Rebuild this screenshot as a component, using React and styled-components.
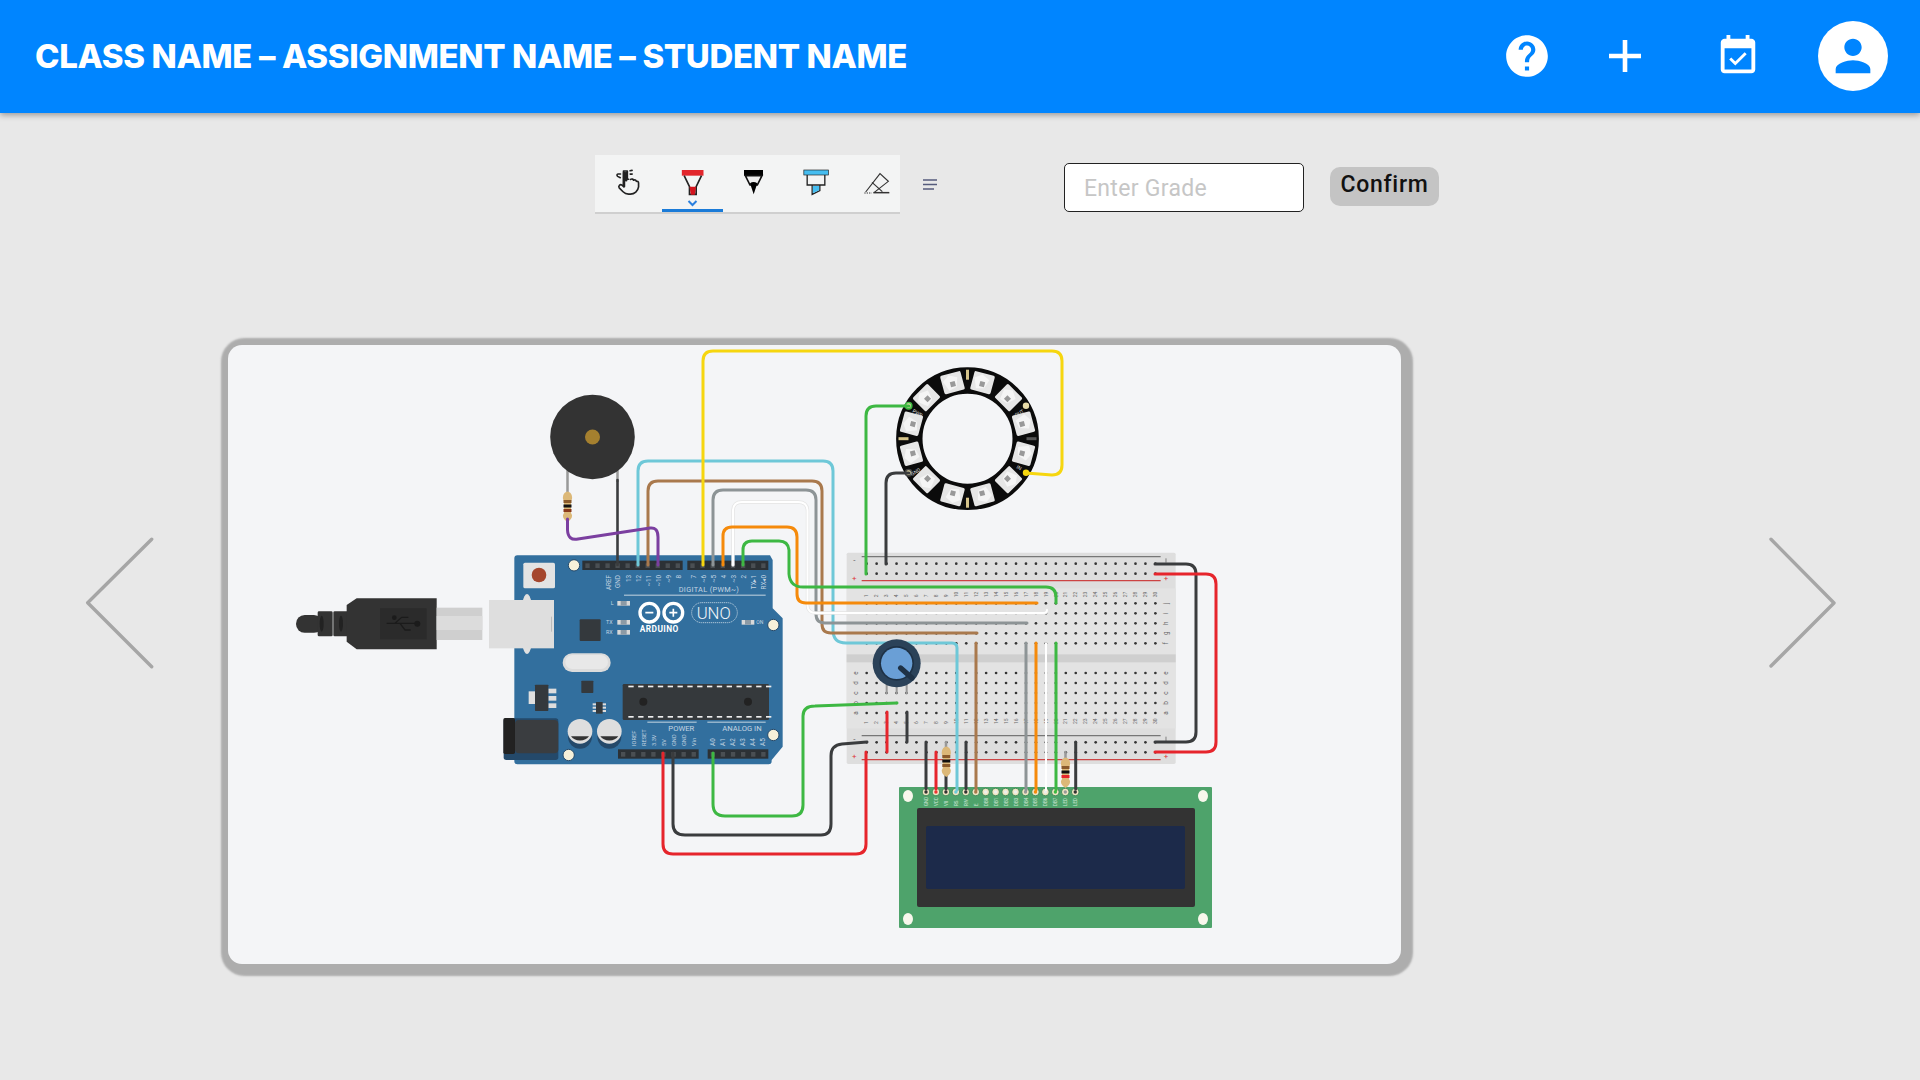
import React from "react";
import styled, { createGlobalStyle } from "styled-components";

const Global = createGlobalStyle`
  html, body { margin: 0; padding: 0; background: #e8e8e8; }
  * { box-sizing: border-box; }
  #root { width: 1920px; height: 1080px; overflow: hidden; }
`;

const Page = styled.div`
  width: 1920px;
  height: 1080px;
  background: #e8e8e8;
  font-family: Roboto, "Liberation Sans", sans-serif;
`;
const Header = styled.header`
  height: 113px;
  background: #0085ff;
  box-shadow: 0 2px 6px rgba(0, 0, 0, 0.35);
  display: flex;
  align-items: center;
  justify-content: space-between;
  padding: 0 32px 1px 35px;
`;
const Title = styled.h1`
  margin: 0;
  color: #fff;
  font: 800 33px/1 Inter, "Liberation Sans", sans-serif;
  letter-spacing: -0.35px;
  white-space: nowrap;
`;
const Actions = styled.div`
  display: flex;
  align-items: center;
`;
const ActionIcon = styled.svg`
  display: block;
  fill: #fff;
  width: ${(p) => p.$size}px;
  height: ${(p) => p.$size}px;
  margin-left: ${(p) => p.$gap || 0}px;
`;
const Avatar = styled.div`
  width: 70px;
  height: 70px;
  margin-left: 57px;
  border-radius: 50%;
  background: #fff;
  display: flex;
  align-items: center;
  justify-content: center;
`;
const AvatarGlyph = styled.svg`
  width: 52px;
  height: 52px;
  fill: #0085ff;
  display: block;
`;
const ControlRow = styled.div`
  display: flex;
  align-items: flex-start;
  margin-top: 42px;
  padding-left: 595px;
  height: 59px;
`;
const Tools = styled.div`
  width: 305px;
  height: 59px;
  padding-left: 5px;
  background: #f3f4f4;
  border-bottom: 2px solid #cfcfcf;
  display: flex;
  overflow: hidden;
`;
const Tool = styled.div`
  flex: 0 0 61.5px;
  height: 57px;
  box-shadow: ${(p) => (p.$active ? "inset 0 -3px 0 #1a7bd8" : "none")};
`;
const ToolGlyph = styled.svg`
  display: block;
  width: 61.5px;
  height: 57px;
`;
const MenuGlyph = styled.svg`
  display: block;
  width: 14px;
  height: 11px;
  margin: 24px 0 0 23px;
`;
const GradeInput = styled.input`
  width: 240px;
  height: 49px;
  margin: 8px 0 0 127px;
  padding: 2px 19px 0;
  background: #fff;
  border: 1.5px solid #222;
  border-radius: 5px;
  font: 400 23px Roboto, sans-serif;
  letter-spacing: 0.3px;
  outline: none;
  &::placeholder { color: #c6c6c6; opacity: 1; }
`;
const ConfirmButton = styled.button`
  width: 109px;
  height: 39px;
  margin: 12px 0 0 26px;
  padding: 0 0 5px;
  background: #c4c4c4;
  border: none;
  border-radius: 10px;
  color: #111;
  font: 500 23px Roboto, sans-serif;
  letter-spacing: 0.7px;
`;
const Stage = styled.main`
  display: flex;
  align-items: flex-start;
  margin-top: 131px;
  padding-left: 85px;
`;
const Chevron = styled.svg`
  display: block;
  flex: none;
  width: 70px;
  height: 132px;
  margin-top: 192px;
  margin-left: ${(p) => p.$left}px;
  fill: none;
  stroke: #a6a6a6;
  stroke-width: 3.4;
  stroke-linecap: round;
  stroke-linejoin: round;
`;
const Card = styled.section`
  flex: none;
  width: 1173px;
  height: 619px;
  margin-left: 73px;
  background: #f4f5f7;
  border-radius: 14px;
  box-shadow: 2.5px 2.5px 2px 9.5px #adadad;
`;
const Circuit = styled.svg`
  display: block;
  width: 1173px;
  height: 619px;
`;

const range = (n) => Array.from({ length: n }, (_, i) => i);

const Wire = ({ d, c, w = 3 }) => (
  <path d={d} fill="none" stroke={c} strokeWidth={w} strokeLinecap="round" strokeLinejoin="round" />
);

const Rs = ({ x, y, bands }) => (
  <g>
    <path
      d={`M${x - 3} ${y} Q${x} ${y - 3} ${x + 3} ${y} Q${x + 5} ${y + 2} ${x + 4.5} ${y + 6} L${x + 3.5} ${y + 8} V${y + 20} L${x + 4.5} ${y + 22} Q${x + 5} ${y + 26} ${x} ${y + 29} Q${x - 5} ${y + 26} ${x - 4.5} ${y + 22} L${x - 3.5} ${y + 20} V${y + 8} L${x - 4.5} ${y + 6} Q${x - 5} ${y + 2} ${x - 3} ${y}Z`}
      fill="#dcb878"
    />
    {bands.map((b, i) => (
      <rect key={i} x={x - 4} y={y + 7 + i * 4.5} width="8" height="3" fill={b} />
    ))}
  </g>
);

const UsbAndBoard = () => {
  const topA = ["AREF", "GND", "13", "12", "~11", "~10", "~9", "8"];
  const topAx = [985, 1013, 1045, 1075, 1105, 1135, 1165, 1195];
  const topB = ["7", "~6", "~5", "4", "~3", "2", "TX▸1", "RX◂0"];
  const bot = ["IOREF", "RESET", "3.3V", "5V", "GND", "GND", "Vin"];
  const botX = [1062, 1092, 1122, 1150, 1180, 1210, 1240];
  const label = "#c5d5e2";
  const Holes = ({ x, y, w, n }) => (
    <g>
      <rect x={x} y={y} width={w} height="28" fill="#2c3135" />
      {range(n).map((i) => (
        <rect key={i} x={x + 9 + i * (w / n)} y={y + 8} width="13" height="14" fill="#4a4f53" />
      ))}
    </g>
  );
  return (
    <g transform="translate(280 540) scale(0.33333)">
      <rect x="48" y="225" width="80" height="53" rx="26" fill="#333" />
      <rect x="113" y="214" width="45" height="75" rx="4" fill="#333" />
      <rect x="160" y="214" width="45" height="75" rx="4" fill="#333" />
      <ellipse cx="125" cy="251" rx="6" ry="24" fill="#222" />
      <ellipse cx="183" cy="251" rx="6" ry="24" fill="#222" />
      <path d="M200 195L230 175H470V328H230L200 305Z" fill="#333" />
      <rect x="300" y="205" width="140" height="93" fill="#2b2b2b" />
      <path d="M320 250H420M345 250L365 232H385M360 250L375 270H392" stroke="#1b1b1b" strokeWidth="4" fill="none" />
      <circle cx="412" cy="251" r="9" fill="#1b1b1b" />
      <circle cx="343" cy="233" r="7" fill="#1b1b1b" />
      <rect x="470" y="203" width="137" height="97" fill="#cfcfcf" />
      <rect x="470" y="228" width="137" height="42" fill="#dcdcdc" />
      <path
        d="M703 55Q703 46 712 46H1470L1478 60V205L1508 235V620L1475 660V664Q1475 673 1466 673H712Q703 673 703 664Z"
        fill="#326f9e"
      />
      <ellipse cx="741" cy="252" rx="20" ry="90" fill="#e0e0e0" />
      <rect x="627" y="180" width="195" height="145" fill="#dedede" />
      <rect x="813" y="230" width="2" height="45" fill="#aaa" />
      <rect x="730" y="68" width="95" height="77" rx="5" fill="#e3e3e3" />
      <circle cx="777" cy="105" r="22" fill="#a5462d" />
      {[[882, 76], [1480, 255], [1480, 585], [866, 645]].map(([x, y]) => (
        <circle key={x} cx={x} cy={y} r="17" fill="#f6f1da" stroke="#24496a" strokeWidth="3" />
      ))}
      <Holes x={907} y={62} w={301} n={10} />
      <Holes x={1222} y={62} w={243} n={8} />
      <Holes x={1014} y={628} w={242} n={8} />
      <Holes x={1283} y={628} w={182} n={6} />
      <g fill={label} fontFamily="Roboto, sans-serif" fontSize="19">
        {topA.map((t, i) => (
          <text key={t} transform={`translate(${topAx[i] + 7} 105) rotate(-90)`} textAnchor="end">{t}</text>
        ))}
        {topB.map((t, i) => (
          <text key={t} transform={`translate(${1247 + i * 30} 105) rotate(-90)`} textAnchor="end">{t}</text>
        ))}
        {bot.map((t, i) => (
          <text key={i} transform={`translate(${botX[i] + 7} 618) rotate(-90)`} fontSize="17">{t}</text>
        ))}
        {range(6).map((i) => (
          <text key={i} transform={`translate(${1305 + i * 30} 618) rotate(-90)`}>{"A" + i}</text>
        ))}
        <text x="1196" y="157" fontSize="22" letterSpacing="1">DIGITAL (PWM~)</text>
        <text x="1165" y="573" fontSize="23">POWER</text>
        <text x="1327" y="573" fontSize="23">ANALOG IN</text>
        <text x="992" y="196" fontSize="16">L</text>
        <text x="978" y="253" fontSize="16">TX</text>
        <text x="978" y="283" fontSize="16">RX</text>
        <text x="1429" y="251" fontSize="15">ON</text>
      </g>
      <rect x="1032" y="164" width="425" height="3" fill={label} />
      <rect x="1102" y="545" width="148" height="3" fill={label} />
      <rect x="1282" y="545" width="175" height="3" fill={label} />
      {[[1012, 183], [1012, 240], [1012, 270], [1385, 240]].map(([x, y]) => (
        <g key={y + x}>
          <rect x={x} y={y} width="38" height="14" fill="#d9d9d9" />
          <rect x={x + 10} y={y} width="18" height="14" fill="#8c9aa5" />
        </g>
      ))}
      <g fill="none" stroke="#fff" strokeWidth="10">
        <circle cx="1108" cy="218" r="28" />
        <circle cx="1180" cy="218" r="28" />
      </g>
      <path d="M1096 218H1120M1168 218H1192M1180 206V230" stroke="#fff" strokeWidth="5" />
      <text x="1079" y="276" fill="#fff" fontFamily="Roboto, sans-serif" fontWeight="700" fontSize="25" letterSpacing="1.4">ARDUINO</text>
      <rect x="1235" y="188" width="137" height="60" rx="30" fill="none" stroke="#e5edf3" strokeWidth="2" strokeDasharray="4 2" />
      <text x="1250" y="236" fill="#f4f8fb" fontFamily="Roboto, sans-serif" fontWeight="300" fontSize="50">UNO</text>
      <rect x="899" y="238" width="63" height="65" rx="3" fill="#34393d" />
      <rect x="848" y="340" width="144" height="56" rx="28" fill="#dcdcdc" />
      <rect x="856" y="345" width="128" height="42" rx="21" fill="#e8e8e8" />
      <rect x="904" y="422" width="36" height="37" rx="2" fill="#34393d" />
      <rect x="746" y="454" width="20" height="38" fill="#e0e0e0" />
      {[446, 468, 490].map((y) => <rect key={y} x="805" y={y} width="24" height="14" fill="#ddd" />)}
      <rect x="765" y="434" width="40" height="79" rx="2" fill="#34393d" />
      {[490, 500, 510].map((y) => <rect key={y} x="938" y={y} width="40" height="6" fill="#ddd" />)}
      <rect x="948" y="486" width="20" height="35" fill="#34393d" />
      <rect x="1028" y="432" width="439" height="108" rx="4" fill="#35393c" />
      {range(15).map((i) => (
        <g key={i} fill="#eee">
          <rect x={1045 + i * 29.5} y="437" width="16" height="5" />
          <rect x={1045 + i * 29.5} y="528" width="16" height="5" />
        </g>
      ))}
      <circle cx="1090" cy="485" r="12" fill="#222" />
      <circle cx="1404" cy="485" r="12" fill="#222" />
      <rect x="671" y="535" width="164" height="125" rx="8" fill="#24496a" />
      <rect x="705" y="540" width="130" height="100" rx="12" fill="#3a3d40" />
      <rect x="670" y="534" width="35" height="108" rx="5" fill="#222" />
      {[900, 988].map((x) => (
        <g key={x}>
          <circle cx={x} cy="590" r="36" fill="#24496a" />
          <circle cx={x} cy="574" r="37" fill="#dedede" />
          <path d={`M${x - 27} 589A30 22 0 0 0 ${x + 27} 589Z`} fill="#333" />
        </g>
      ))}
    </g>
  );
};

const Breadboard = () => {
  const hole = (x, y) => <circle key={`${x}-${y}`} cx={x} cy={y} r="4" fill="#333" />;
  const cols = range(30).map((i) => 110 + i * 29.87);
  const railRows = [71, 101, 607, 637];
  const mainRows = [190, 220, 250, 280, 310, 399, 429, 459, 489, 519];
  const letters = ["j", "i", "h", "g", "f", "e", "d", "c", "b", "a"];
  return (
    <g transform="translate(830 540) scale(0.33333)">
      <rect x="50" y="38" width="987" height="634" rx="5" fill="#dedede" />
      <rect x="50" y="145" width="987" height="420" fill="#e3e3e3" />
      <rect x="50" y="343" width="987" height="24" fill="#cfcfcf" />
      <g fill="none" strokeWidth="4">
        <path d="M95 50H992M95 587H992" stroke="#777" />
        <path d="M95 122H992M95 659H992" stroke="#c44" />
      </g>
      {railRows.map((y) => cols.map((x) => hole(x, y)))}
      {mainRows.map((y) => cols.map((x) => hole(x, y)))}
      <g fill="#666" fontFamily="Roboto, sans-serif" fontSize="15">
        {cols.map((x, i) => (
          <React.Fragment key={x}>
            <text transform={`translate(${x + 5} 172) rotate(-90)`}>{i + 1}</text>
            <text transform={`translate(${x + 5} 552) rotate(-90)`}>{i + 1}</text>
          </React.Fragment>
        ))}
        {letters.map((l, i) => (
          <React.Fragment key={l}>
            <text transform={`translate(${1014} ${mainRows[i]}) rotate(-90)`} textAnchor="middle" fontSize="19">{l}</text>
            {i > 4 && <text transform={`translate(${84} ${mainRows[i]}) rotate(-90)`} textAnchor="middle" fontSize="19">{l}</text>}
          </React.Fragment>
        ))}
      </g>
      <g fontFamily="Roboto, sans-serif" fontSize="24" textAnchor="middle">
        <text x="73" y="70" fill="#555">-</text>
        <text x="73" y="122" fill="#d33">+</text>
        <text x="1008" y="122" fill="#d33">+</text>
        <text x="73" y="606" fill="#555">-</text>
        <text x="73" y="657" fill="#d33">+</text>
        <text x="1008" y="657" fill="#d33">+</text>
      </g>
      <path d="M1008 55V68M1008 590V603" stroke="#555" strokeWidth="2" />
    </g>
  );
};

const Potentiometer = () => (
  <g transform="translate(830 540) scale(0.33333)">
    {[170, 200, 230].map((x) => (
      <path key={x} d={`M${x} 430V462`} stroke="#999" strokeWidth="6" />
    ))}
    <circle cx="200" cy="370" r="72" fill="#2b4259" />
    <circle cx="200" cy="370" r="52" fill="#1e3145" />
    <circle cx="200" cy="370" r="47" fill="#6a9fd6" />
    <path d="M212 384L246 414" stroke="#1e3145" strokeWidth="16" strokeLinecap="round" />
  </g>
);

const Lcd = () => {
  const pinColors = ["#333", "#e33", "#333", "#6ec8d8", "#333", "#a9794d", "#eee", "#eee", "#eee", "#eee", "#999", "#f58a0b", "#eee", "#3db843", "#999", "#333"];
  const names = ["GND", "VCC", "V0", "RS", "RW", "E", "DB0", "DB1", "DB2", "DB3", "DB4", "DB5", "DB6", "DB7", "LED", "LED"];
  return (
    <g>
      <rect x="899" y="787" width="313" height="141" rx="1" fill="#4ea36b" />
      <rect x="917" y="808" width="278" height="99" rx="2" fill="#333" />
      <rect x="926" y="826" width="259" height="63" rx="2" fill="#1c2a4a" />
      {[[908, 796], [1203, 796], [908, 919], [1203, 919]].map(([x, y]) => (
        <ellipse key={x + "" + y} cx={x} cy={y} rx="5" ry="6" fill="#f8f7ec" />
      ))}
      {pinColors.map((c, i) => (
        <g key={i}>
          <circle cx={926 + i * 9.95} cy="792" r="3.8" fill="#f1e7c4" stroke="#2f7d4c" strokeWidth="0.8" />
          <circle cx={926 + i * 9.95} cy="792" r="1.7" fill={c} />
          <text transform={`translate(${928 + i * 9.95} 806) rotate(-90)`} fontFamily="Roboto, sans-serif" fontSize="4.5" fill="#cfe5d7">{names[i]}</text>
        </g>
      ))}
    </g>
  );
};

const Ring = () => {
  const cx = 967.5;
  const cy = 438.7;
  return (
    <g>
      <circle cx={cx} cy={cy} r="58.2" fill="none" stroke="#0b0b0b" strokeWidth="26.4" />
      {range(12).map((i) => (
        <g key={i} transform={`translate(${cx} ${cy}) rotate(${15 + i * 30}) translate(0 -58)`}>
          <rect x="-10.5" y="-9.5" width="21" height="19" rx="1.5" fill="#e6e6e6" />
          <path d="M-9 -3L-2 -8L6 -4L3 5L-5 7Z" fill="#f5f5f5" />
          <rect x="-2.5" y="-1" width="5" height="5" fill="#999" />
        </g>
      ))}
      {[0, 90, 180, 270].map((a) => (
        <g key={a} transform={`translate(${cx} ${cy}) rotate(${a}) translate(0 -64)`}>
          <rect x="-1.5" y="-5" width="3" height="10" fill={a === 90 ? "#555" : "#d6c48a"} />
        </g>
      ))}
      <circle cx="908.6" cy="405.7" r="3.2" fill="#e8dca8" stroke="#3db843" strokeWidth="1.6" />
      <circle cx="908.6" cy="472.7" r="3.2" fill="#e8dca8" stroke="#444" strokeWidth="1.6" />
      <circle cx="1026" cy="472.7" r="3.2" fill="#f6d60f" />
      <circle cx="1026" cy="405.7" r="3.2" fill="#e8dca8" />
      <g fill="#ddd" fontFamily="Roboto, sans-serif" fontSize="5">
        <text transform="translate(912 412) rotate(30)">PWR</text>
        <text transform="translate(912 476) rotate(-30)">GND</text>
        <text transform="translate(1016 417) rotate(-30)">OUT</text>
        <text transform="translate(1016 468) rotate(30)">IN</text>
      </g>
    </g>
  );
};

const Buzzer = () => (
  <g>
    <path d="M567.5 470V495" stroke="#999" strokeWidth="2.5" />
    <path d="M617.5 470V482" stroke="#999" strokeWidth="2.5" />
    <circle cx="592.5" cy="437" r="42.3" fill="#333" />
    <circle cx="592.5" cy="437" r="7.5" fill="#a5802f" />
    <Rs x={567.5} y={493} bands={["#8a5a2b", "#111", "#8a3a1b"]} />
  </g>
);

const Wires = () => (
  <g>
    <Wire c="#3a3c3e" w={2.6} d="M617.5 480V565" />
    <Wire c="#6ec8d8" d="M638 565V471Q638 461 648 461H823Q833 461 833 471V630Q833 643 846 643H952Q957 643 957 648V790" />
    <Wire c="#a9794d" d="M648 565V491Q648 481 658 481H812Q822 481 822 491V624Q822 633 831 633H977" />
    <Wire c="#a9794d" d="M976 643V790" />
    <Wire c="#7b3fa0" d="M567.5 519V530Q568 541 578 539L650 528Q658 527 658 537V565" />
    <Wire c="#8d9496" d="M713 565V500Q713 490 723 490H806Q816 490 816 500V614Q816 623 825 623H1027" />
    <Wire c="#8d9496" d="M1026 643V790" />
    <Wire c="#e4e4e4" w={3.4} d="M733 565V511Q733 502 742 502H798Q807.5 502 807.5 511V605Q807.5 613 816 613H1043Q1047 613 1047 610" />
    <Wire c="#ffffff" w={2} d="M733 565V511Q733 502 742 502H798Q807.5 502 807.5 511V605Q807.5 613 816 613H1043Q1047 613 1047 610" />
    <Wire c="#ffffff" w={2} d="M1046 643V790" />
    <Wire c="#f58a0b" d="M723 565V536Q723 527 732 527H787Q797 527 797 537V594Q797 603 806 603H1037" />
    <Wire c="#f58a0b" d="M1036 643V790" />
    <Wire c="#3db843" d="M743 565V550Q743 541 752 541H779Q788 541 789 550V574Q790 587 803 587H1046Q1056 587 1056 597V603" />
    <Wire c="#3db843" d="M1056 643V790" />
    <Wire c="#f6d60f" d="M703 565V361Q703 351 713 351H1052Q1062 351 1062 361V465Q1062 475 1052 475L1026 473" />
    <Wire c="#3db843" d="M909 406H876Q866 406 866 416V574" />
    <Wire c="#3a3c3e" d="M909 473H896Q886 473 886 483V564" />
    <Wire c="#3db843" d="M713 753V804Q713 816 725 816H792Q803 816 803 805V716Q803 706 815 706L897 703" />
    <Wire c="#e6252c" d="M663 753V844Q663 854 673 854H856Q866 854 866 844V752" />
    <Wire c="#3a3c3e" d="M673 753V824Q673 835 685 835H821Q831 835 831 824V756Q831 745 842 744L867 742" />
    <Wire c="#e6252c" d="M887 712V752" />
    <Wire c="#3a3c3e" d="M907 712V742" />
    <Wire c="#3a3c3e" d="M926 742V789" />
    <Wire c="#e6252c" d="M936 752V789" />
    <Wire c="#999" w={2.5} d="M946 742V750" />
    <Wire c="#3a3c3e" d="M946 775V789" />
    <Wire c="#3a3c3e" d="M966 742V789" />
    <Wire c="#999" w={2.5} d="M1065.5 752V760" />
    <Wire c="#3a3c3e" d="M1075.7 742V789" />
    <Wire c="#3a3c3e" d="M1155 564H1186Q1196 564 1196 574V732Q1196 742 1186 742H1155" />
    <Wire c="#e6252c" d="M1155 574H1206Q1216 574 1216 584V742Q1216 752 1206 752H1155" />
    <Rs x={946.3} y={748} bands={["#8a5a2b", "#111", "#8a5a2b"]} />
    <Rs x={1065.5} y={759} bands={["#8a5a2b", "#111", "#e6252c"]} />
  </g>
);

const ToolIcon = ({ i, children }) => (
  <ToolGlyph viewBox={`${60 + 184.5 * i} 45 184.5 171`}>{children}</ToolGlyph>
);

const App = () => (
  <Page>
    <Global />
    <Header>
      <Title>CLASS NAME – ASSIGNMENT NAME – STUDENT NAME</Title>
      <Actions>
        <ActionIcon $size={50} viewBox="0 0 24 24">
          <path d="M12 2C6.48 2 2 6.48 2 12s4.48 10 10 10 10-4.48 10-10S17.52 2 12 2zm1 17h-2v-2h2v2zm2.07-7.75l-.9.92C13.45 12.9 13 13.5 13 15h-2v-.5c0-1.1.45-2.1 1.17-2.83l1.24-1.26c.37-.36.59-.86.59-1.41 0-1.1-.9-2-2-2s-2 .9-2 2H8c0-2.21 1.79-4 4-4s4 1.79 4 4c0 .88-.36 1.68-.93 2.25z" />
        </ActionIcon>
        <ActionIcon $size={32} $gap={57} viewBox="0 0 32 32">
          <path d="M13.7 0h4.6v13.7H32v4.6H18.3V32h-4.6V18.3H0v-4.6h13.7z" />
        </ActionIcon>
        <ActionIcon $size={46} $gap={74} viewBox="0 0 24 24">
          <path d="M16.53 11.06L15.47 10l-4.88 4.88-2.12-2.12-1.06 1.06L10.59 17l5.94-5.94zM19 3h-1V1h-2v2H8V1H6v2H5c-1.11 0-1.99.9-1.99 2L3 19c0 1.1.89 2 2 2h14c1.1 0 2-.9 2-2V5c0-1.1-.9-2-2-2zm0 16H5V8h14v11z" />
        </ActionIcon>
        <Avatar>
          <AvatarGlyph viewBox="0 0 24 24">
            <path d="M12 12c2.21 0 4-1.79 4-4s-1.79-4-4-4-4 1.79-4 4 1.79 4 4 4zm0 2c-2.67 0-8 1.34-8 4v2h16v-2c0-2.66-5.33-4-8-4z" />
          </AvatarGlyph>
        </Avatar>
      </Actions>
    </Header>
    <ControlRow>
      <Tools>
        <Tool>
          <ToolIcon i={0}>
            <g transform="translate(109 88) scale(3.3)" fill="none" stroke="#222" strokeWidth="1.5" strokeLinecap="round" strokeLinejoin="round">
              <path d="M6.5 1.5H10V9h1.2M13 9.2c1-.8 2.4-.3 2.7.7c1-.6 2.3 0 2.5 1c1-.3 2 .2 2 1.6v3.5a7.5 7.5 0 0 1-7.5 6.5h-1.6c-2.4 0-3.7-.8-5-2.1L2.6 16.8a1.8 1.8 0 0 1 2.5-2.5L6.5 15.5V2" />
              <path d="M7 3v12.5M9 3v7" strokeWidth="2.2" />
              <path d="M3.8 4.2H1.4c-.8 0-1.2 1.6-.2 2.2l2.4 1.2M12.5 1.3l1.8-.3M12.6 4.3h1.8" />
            </g>
          </ToolIcon>
        </Tool>
        <Tool $active>
          <ToolIcon i={1}>
            <rect x="304" y="90" width="65" height="17" fill="#e2262c" />
            <path d="M311 107L327 140V163H347V140L363 107" fill="none" stroke="#222" strokeWidth="5" />
            <path d="M327 140H347L343 164H331Z" fill="#d3141d" />
            <path d="M324 183L336 195L348 183" fill="none" stroke="#2a7fde" strokeWidth="6" />
          </ToolIcon>
        </Tool>
        <Tool>
          <ToolIcon i={2}>
            <rect x="492" y="90" width="57" height="17" fill="#000" />
            <path d="M496 107L510 135H532L546 107Z" fill="#eee" stroke="#111" strokeWidth="5" />
            <path d="M510 130Q520 122 532 130L521 163Z" fill="#000" />
          </ToolIcon>
        </Tool>
        <Tool>
          <ToolIcon i={3}>
            <rect x="670" y="90" width="74" height="15" fill="#45bdf0" stroke="#222" strokeWidth="2" />
            <path d="M680 105V135H733V105M695 135V163L718 152V135" fill="none" stroke="#222" strokeWidth="4" />
            <path d="M697 138H716V151L697 160Z" fill="#45bdf0" />
          </ToolIcon>
        </Tool>
        <Tool>
          <ToolIcon i={4}>
            <g fill="none" stroke="#333" strokeWidth="3.5">
              <path d="M857 156L900 101L925 124L882 158" />
              <path d="M876 127L907 155" />
              <path d="M880 158H928" strokeWidth="4.5" />
              <path d="M853 159H875" strokeDasharray="4 3" />
            </g>
          </ToolIcon>
        </Tool>
      </Tools>
      <MenuGlyph viewBox="0 0 14 11">
        <path d="M0 1H14M0 5.5H14M0 10H11" stroke="#555b7c" strokeWidth="1.6" fill="none" />
      </MenuGlyph>
      <GradeInput placeholder="Enter Grade" />
      <ConfirmButton>Confirm</ConfirmButton>
    </ControlRow>
    <Stage>
      <Chevron $left={0} viewBox="0 0 70 132">
        <path d="M66.7 2.3L2.7 65.7L66.7 129.7" />
      </Chevron>
      <Card>
        <Circuit viewBox="228 345 1173 619">
          <UsbAndBoard />
          <Breadboard />
          <Buzzer />
          <Ring />
          <Lcd />
          <Wires />
          <Potentiometer />
        </Circuit>
      </Card>
      <Chevron $left={367} viewBox="0 0 70 132">
        <path d="M3 2.3L66 66L3 129" />
      </Chevron>
    </Stage>
  </Page>
);

export default App;
